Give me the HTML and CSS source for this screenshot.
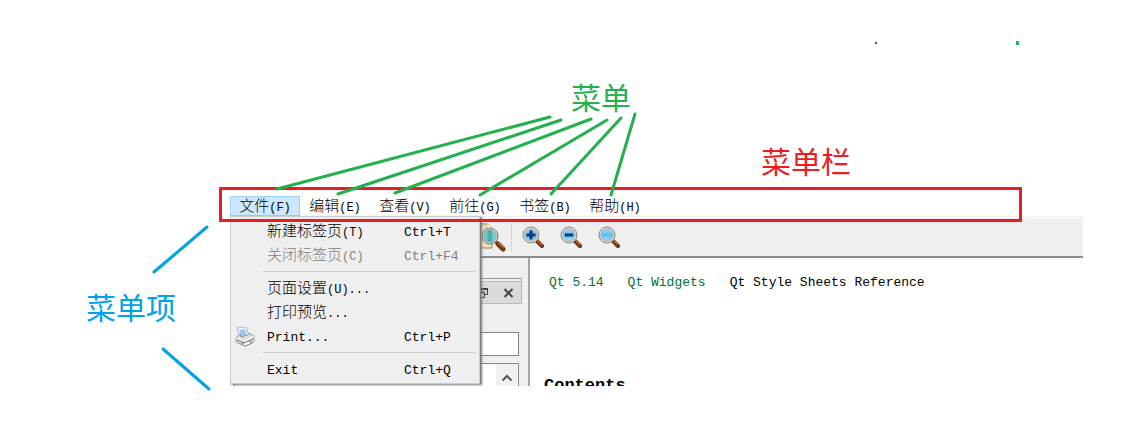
FILE: index.html
```html
<!DOCTYPE html>
<html lang="zh-CN">
  <head>
    <meta charset="UTF-8" />
    <meta name="viewport" content="width=device-width, initial-scale=1.0" />
    <title>菜单栏</title>
    <link rel="stylesheet" href="styles.css">
  </head>
  <body>
    <svg width="0" height="0" class="defs" aria-hidden="true">
      <defs>
        <linearGradient id="lens" x1="0" y1="0" x2="0" y2="1">
          <stop offset="0" stop-color="#a5dcf7" />
          <stop offset="0.5" stop-color="#5bbdf0" />
          <stop offset="1" stop-color="#9ae6fb" />
        </linearGradient>
        <linearGradient id="lens-green" x1="0" y1="0" x2="1" y2="0">
          <stop offset="0" stop-color="#8edbd8" />
          <stop offset="0.5" stop-color="#35a9ae" />
          <stop offset="1" stop-color="#a5e5e2" />
        </linearGradient>
        <symbol id="magnifier" viewBox="0 0 22 22">
          <path d="M13 13l3 3" stroke="#77776f" stroke-width="3" />
          <path d="M15 15l5 5" stroke="#6b3413" stroke-width="4" stroke-linecap="round" />
          <path d="M15.500 14.500l4 4" stroke="#c0692b" stroke-width="1.500" stroke-linecap="round" />
          <circle cx="9" cy="9" r="8" fill="#d6d8d5" stroke="#858784" />
          <circle cx="9" cy="9" r="5.800" fill="url(#lens)" stroke="#9aa6a8" stroke-width="0.800" />
        </symbol>
      </defs>
    </svg>

    <main class="figure">
      <div class="window">
        <nav class="menubar">
          <button class="menu-title active">文件<span class="key">(F)</span></button>
          <button class="menu-title">编辑<span class="key">(E)</span></button>
          <button class="menu-title">查看<span class="key">(V)</span></button>
          <button class="menu-title">前往<span class="key">(G)</span></button>
          <button class="menu-title">书签<span class="key">(B)</span></button>
          <button class="menu-title">帮助<span class="key">(H)</span></button>
        </nav>

        <div class="toolbar">
          <button class="tool" aria-label="Find">
            <svg width="30" height="30" viewBox="0 0 30 30" fill="none">
              <path d="M1 2h9l5 5v19H1z" fill="#eee3b8" stroke="#9c8752" />
              <path d="M9 2c3 0 5 2 6 6l-5-1z" fill="#fffbe6" stroke="#b39d65" stroke-width="0.700" />
              <path d="M18 19l4 4" stroke="#60645f" stroke-width="3" />
              <path d="M21 22l5 5" stroke="#743812" stroke-width="5" stroke-linecap="round" />
              <path d="M22 21l4 4" stroke="#bd6528" stroke-width="2" stroke-linecap="round" />
              <circle cx="13" cy="14" r="8" fill="#d3d5d2" stroke="#737873" />
              <circle cx="13" cy="14" r="6" fill="url(#lens-green)" stroke="#7c9392" stroke-width="0.800" />
            </svg>
          </button>
          <span class="tool-separator"></span>
          <button class="tool" aria-label="Zoom in">
            <svg width="22" height="22" viewBox="0 0 22 22" fill="none">
              <use href="#magnifier" />
              <path d="M9 4.500v9M4.500 9h9" stroke="#0d3b7c" stroke-width="3.200" />
            </svg>
          </button>
          <button class="tool" aria-label="Zoom out">
            <svg width="22" height="22" viewBox="0 0 22 22" fill="none">
              <use href="#magnifier" />
              <path d="M5 9h8" stroke="#0d3b7c" stroke-width="3" />
            </svg>
          </button>
          <button class="tool" aria-label="Reset zoom">
            <svg width="22" height="22" fill="none"><use href="#magnifier" /></svg>
          </button>
        </div>

        <div class="workspace">
          <aside class="dock">
            <div class="dock-title">
              <button class="dock-button" aria-label="Float">
                <svg width="12" height="12" viewBox="0 0 12 12" fill="none" stroke="#444">
                  <path d="M4 1.500h7M4 2.500h7M4.500 3v1M10.500 3v4.500H8M1 5h7M1 6h7M1.500 6v4.500h6V6" />
                </svg>
              </button>
              <button class="dock-button" aria-label="Close">
                <svg width="12" height="12" viewBox="0 0 12 12" fill="none" stroke="#444" stroke-width="2">
                  <path d="M1.500 2l8 8M9.500 2l-8 8" />
                </svg>
              </button>
            </div>
            <input class="search" type="text" aria-label="Look for" />
            <div class="list">
              <button class="scroll-up" aria-label="Scroll up">
                <svg width="12" height="8" viewBox="0 0 12 8" fill="none" stroke="#555" stroke-width="2">
                  <path d="M1.500 6.500L6 2l4.500 4.500" />
                </svg>
              </button>
            </div>
          </aside>

          <article class="page">
            <div class="breadcrumb">
              <a href="#">Qt 5.14</a>
              <a href="#">Qt Widgets</a>
              <span>Qt Style Sheets Reference</span>
            </div>
            <h2>Contents</h2>
          </article>
        </div>

        <div class="menu-frame" aria-hidden="true"></div>

        <div class="menu">
          <button class="menu-item"><span class="label">新建标签页<span class="key">(T)</span></span><span class="shortcut">Ctrl+T</span></button>
          <button class="menu-item" disabled><span class="label">关闭标签页<span class="key">(C)</span></span><span class="shortcut">Ctrl+F4</span></button>
          <hr />
          <button class="menu-item"><span class="label">页面设置<span class="key">(U)...</span></span></button>
          <button class="menu-item"><span class="label">打印预览<span class="key">...</span></span></button>
          <button class="menu-item">
            <svg class="item-icon" width="20" height="20" viewBox="0 0 20 20" fill="none">
              <path d="M4 10L2 1l9-1 3 9z" fill="#f4f8ff" stroke="#8fa6d4" stroke-width="0.800" />
              <path d="M4 3l6-1 2 7-6 1z" fill="#9fc6f5" />
              <path d="M1 11l4-4 1 3 7-2 1-2 5 3v6l-9 4-9-4z" fill="#dededc" stroke="#858585" stroke-width="0.800" />
              <path d="M1 11l9 3 9-5" stroke="#fff" />
              <path d="M2 13l8 3 8-4" stroke="#777" />
              <path d="M6 17l4 2 7-3-3-2-5 2z" fill="#f8f8f8" stroke="#666" stroke-width="0.700" />
              <path d="M14 14l3-1" stroke="#62b34b" />
            </svg>
            <span class="label latin">Print...</span><span class="shortcut">Ctrl+P</span>
          </button>
          <hr />
          <button class="menu-item"><span class="label latin">Exit</span><span class="shortcut">Ctrl+Q</span></button>
        </div>
      </div>

      <svg class="lines" width="1148" height="438" viewBox="0 0 1148 438" fill="none" stroke-width="3" stroke-linecap="round" aria-hidden="true">
        <g stroke="#22b14c">
          <path d="M277 189L550 117" />
          <path d="M338 194L561 120" />
          <path d="M395 193L591 119" />
          <path d="M480 195L607 120" />
          <path d="M551 194L621 118" />
          <path d="M611 195L635 114" />
        </g>
        <g stroke="#00a2e8">
          <path d="M154 272L207 227" />
          <path d="M163 349L209 389" />
        </g>
        <path d="M1016 41h3v4h-3z" fill="#22b14c" />
        <path d="M875 42h2v2h-2z" fill="#555" />
      </svg>

      <span class="note note-menu">菜单</span>
      <span class="note note-bar">菜单栏</span>
      <span class="note note-item">菜单项</span>
    </main>
  </body>
</html>
```
FILE: styles.css
```css
* {
  margin: 0;
  padding: 0;
  box-sizing: border-box;
}

:root {
  --panel: #efefef;
  --green: #22b14c;
  --red: #ed1c24;
  --blue: #00a2e8;
}

body {
  font-family: "Liberation Mono", "Noto Sans CJK SC", monospace;
  font-size: 15px;
  color: #000;
  background: #fff;
}

button {
  font: inherit;
  color: inherit;
  background: none;
  border: none;
}

.defs {
  position: absolute;
}

.figure {
  position: relative;
  padding: 195px 65px 52px 230px;
  overflow: hidden;
}

.window {
  position: relative;
}

.menubar {
  display: flex;
  height: 23px;
  padding-top: 1px;
  border-bottom: 1px solid #fff;
  box-shadow: inset 0 -1px #f0f0f0;
}

.menu-title {
  height: 20px;
  width: 70px;
  padding-top: 2px;
  font-weight: 300;
  line-height: 20px;
  white-space: nowrap;
}

.menu-title.active {
  background: #cce8ff;
  outline: 1px solid #99d1ff;
  outline-offset: -1px;
}

.key {
  font-size: 12px;
}

.toolbar {
  display: flex;
  align-items: center;
  gap: 16px;
  height: 40px;
  padding-left: 247px;
  background: var(--panel);
  border-bottom: 2px solid #8c8c8c;
}

.tool {
  display: flex;
}

.tool-separator {
  width: 1px;
  height: 30px;
  margin: 0 -6px 0 -12px;
  background: #d5d5d5;
}

/* main area */
.workspace {
  display: flex;
  height: 128px;
  overflow: hidden;
}

.dock {
  width: 300px;
  padding: 20px 6px 0 4px;
  background: var(--panel);
  border-right: 2px solid #a5a5a5;
}

.dock-title {
  display: flex;
  justify-content: flex-end;
  align-items: center;
  gap: 14px;
  height: 26px;
  padding: 4px 6px 0 0;
  background: #dadada;
  border: 1px solid #b9b9b9;
  border-top-color: #999;
  box-shadow: inset 0 2px var(--panel), inset 0 3px #b9b9b9;
}

.dock-button {
  display: flex;
}

.search {
  display: block;
  width: 285px;
  height: 24px;
  margin-top: 28px;
  border: 1px solid #858585;
  background: #fff;
}

.list {
  display: flex;
  justify-content: flex-end;
  width: 285px;
  height: 30px;
  margin-top: 7px;
  padding-right: 1px;
  border: 1px solid #828790;
  background: #fff;
}

.scroll-up {
  width: 21px;
  background: #f0f0f0;
}

.page {
  flex: 1;
  padding: 14px;
}

.breadcrumb {
  display: flex;
  gap: 24px;
  padding: 0 5px;
  font-size: 13px;
  line-height: 22px;
}

.breadcrumb a {
  color: #007330;
  text-decoration: none;
}

.page h2 {
  margin-top: 82px;
  font-size: 17px;
  line-height: 20px;
}

/* open menu */
.menu {
  position: absolute;
  top: 21px;
  left: 0;
  width: 250px;
  padding: 3px 2px 1px;
  background: var(--panel);
  border: 1px solid #ccc;
  box-shadow: 2px 1px 2px #777;
}

.menu-item {
  position: relative;
  display: grid;
  grid-template-columns: 137px 1fr;
  align-items: center;
  width: 100%;
  height: 24px;
  padding: 2px 0 0 34px;
  font-weight: 300;
  line-height: 22px;
  text-align: left;
}

.menu-item:disabled {
  color: #808080;
}

.latin,
.shortcut {
  font-size: 13px;
}

.item-icon {
  position: absolute;
  left: 2px;
  top: 2px;
}

.menu hr {
  height: 1px;
  margin: 3px 1px 5px 30px;
  border: none;
  background: #d0d0d0;
}

/* annotations */
.menu-frame {
  position: absolute;
  top: -8px;
  left: -11px;
  right: 61px;
  height: 35px;
  border: 3px solid var(--red);
  z-index: 1;
}

.lines {
  position: absolute;
  top: 0;
  left: 0;
  z-index: 2;
  pointer-events: none;
}

.note {
  position: absolute;
  font-family: "Noto Sans CJK SC", sans-serif;
  font-size: 30px;
  line-height: 36px;
}

.note-menu {
  top: 78px;
  left: 571px;
  color: var(--green);
}

.note-bar {
  top: 142px;
  left: 761px;
  color: var(--red);
}

.note-item {
  top: 288px;
  left: 86px;
  color: var(--blue);
}
```
